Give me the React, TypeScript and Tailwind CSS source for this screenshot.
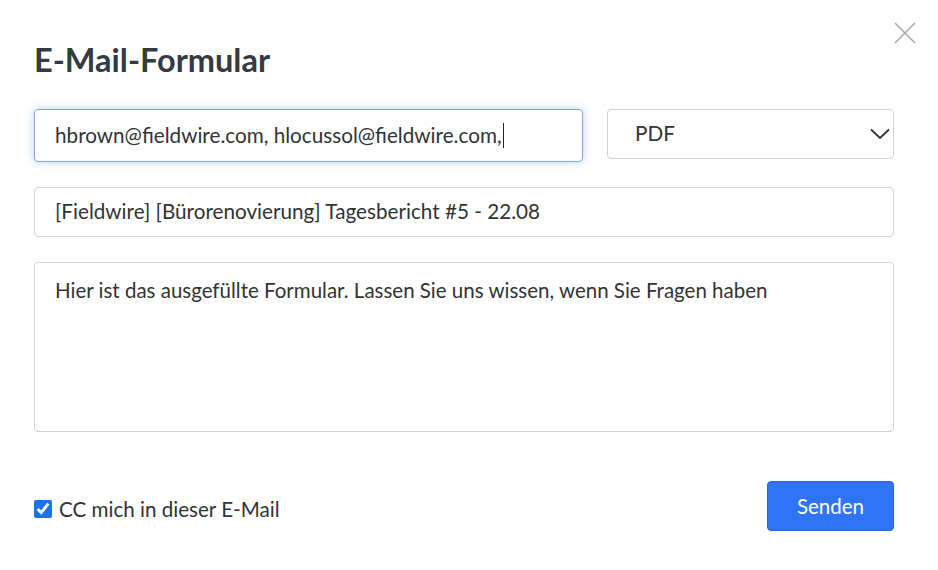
import React, { useState } from 'react';

const App: React.FC = () => {
  const [cc, setCc] = useState(true);

  return (
    <div className="w-[938px] h-[570px] bg-white relative font-['Lato',sans-serif] text-[#333]">
      <button className="absolute right-[22px] top-[22px] w-[22px] h-[22px] text-[#a9a9a9]">
        <svg viewBox="0 0 22 22" className="w-[22px] h-[22px]" fill="none" stroke="currentColor" strokeWidth="1.6">
          <path d="M1 1L21 21M21 1L1 21" />
        </svg>
      </button>

      <div className="pl-[34px] pt-[40px] pr-[44px]">
        <h1 className="text-[32.5px] font-bold text-[#343a42] leading-[40px]">E-Mail-Formular</h1>

        <div className="flex gap-[24px] mt-[29px] items-start">
          <div className="w-[549px] h-[53px] border border-[#7fa8dc] rounded-[4px] shadow-[0_0_8px_rgba(102,153,230,0.45)] flex items-center pl-[20px] text-[20.7px]">
            <span>hbrown@fieldwire.com, hlocussol@fieldwire.com,</span>
            <span className="inline-block w-[1.5px] h-[25px] bg-[#222] ml-[1px]"></span>
          </div>
          <div className="flex-1 h-[50px] border border-[#d3d3d3] rounded-[4px] flex items-center justify-between pl-[27px] pr-[3px] text-[20.7px]">
            <span>PDF</span>
            <svg viewBox="0 0 20 12" className="w-[20px] h-[12px]" fill="none" stroke="#333" strokeWidth="1.8">
              <path d="M1 1.5L10 10L19 1.5" />
            </svg>
          </div>
        </div>

        <div className="mt-[25px] h-[50px] border border-[#d3d3d3] rounded-[4px] flex items-center pl-[20px] text-[20.7px]">
          [Fieldwire] [Bürorenovierung] Tagesbericht #5 - 22.08
        </div>

        <div className="mt-[25px] h-[170px] border border-[#d3d3d3] rounded-[4px] pl-[20px] pt-[13px] text-[20.5px] leading-[28px]">
          Hier ist das ausgefüllte Formular. Lassen Sie uns wissen, wenn Sie Fragen haben
        </div>

        <div className="mt-[49px] flex items-center justify-between">
          <label className="flex items-center gap-[7px] text-[20.6px] mt-[7px]">
            <input
              type="checkbox"
              checked={cc}
              onChange={e => setCc(e.target.checked)}
              className="w-[18px] h-[18px] accent-[#1a73e8]"
            />
            <span>CC mich in dieser E-Mail</span>
          </label>
          <button className="w-[127px] h-[50px] bg-[#2f74f5] rounded-[4px] text-white text-[20.5px] border border-[#2a66d8]">
            Senden
          </button>
        </div>
      </div>
    </div>
  );
};

export default App;
